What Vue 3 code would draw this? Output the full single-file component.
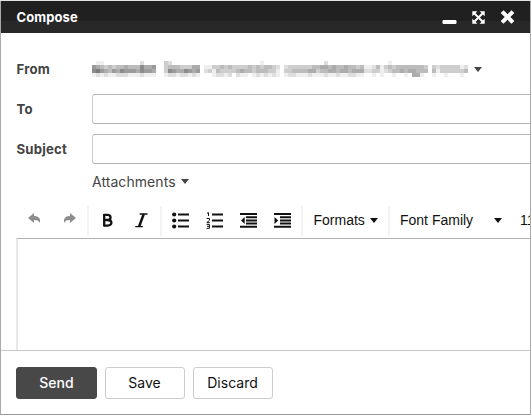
<script setup>
import { computed } from 'vue'

// Darkness levels for the obscured sender, four pixels per cell.
const senderRows = [
  '.11.........2.....32......................1...............2...............1...................',
  '6543434454447556..344433355.1133434333343434432.2333333445545445443411' + '24134344444443.323333312',
  '7865465766657665..376557656.2314333345443444331.3344445534455455455522' + '33123445455444.413333334',
  '1212112221112111..122122121...12212.211.1212121.12211121112112112211..' + '1.1..1..1.551..1..1...1.'
]

const senderCells = computed(() =>
  senderRows.flatMap((row, y) =>
    [...row].map((level, x) => ({ x: x * 4, y: y * 4, level: Number(level) }))
      .filter(cell => cell.level > 0)
  )
)
</script>

<template>
  <main class="page">
    <section class="window">
      <header class="titlebar">
        <h1>Compose</h1>
        <svg class="window-icons" viewBox="0 0 74 18" width="74" height="18">
          <rect x="0.5" y="12" width="14" height="4" rx="1.2" fill="#fff" />
          <g stroke="#fff" stroke-width="1.9" fill="#fff">
            <path d="M32 5L41 14M41 5L32 14" />
            <path stroke="none" d="M30.3 3.2H35.4L30.3 8.3zM37.6 3.2h5.1V8.3zM30.3 10.7l5.1 5.1h-5.1zM42.7 10.7v5.1H37.6z" />
          </g>
          <path d="M61.5 5L69.5 13M69.5 5L61.5 13" stroke="#fff" stroke-width="4" stroke-linecap="square" stroke-linejoin="round" />
        </svg>
      </header>

      <div class="fields">
        <div class="row sender-row">
          <label>From</label>
          <svg class="sender" width="380" height="16" viewBox="0 0 380 16" shape-rendering="crispEdges">
            <rect v-for="(cell, i) in senderCells" :key="i" :x="cell.x" :y="cell.y" width="4" height="4" fill="#222" :fill-opacity="cell.level * 0.075" />
          </svg>
          <i class="caret"></i>
        </div>
        <div class="row"><label>To</label><input type="text" aria-label="To"></div>
        <div class="row subject"><label>Subject</label><input type="text" aria-label="Subject"></div>
        <div class="attachments"><span>Attachments</span><i class="caret"></i></div>
      </div>

      <div class="toolbar">
        <div class="group history">
          <svg width="13" height="12" viewBox="0 0 13 12"><path d="M0 5L6 0V3C10.5 3 12.6 5 12 10C10.5 7.6 9 7 6 7V10Z" fill="#8d8d8d" /></svg>
          <svg width="13" height="12" viewBox="0 0 13 12"><path d="M12 5L6 0V3C1.5 3-.6 5 0 10C1.5 7.6 3 7 6 7V10Z" fill="#8d8d8d" /></svg>
        </div>
        <div class="group style">
          <svg width="12" height="15" viewBox="0 0 12 15"><path d="M1.6 1.8H5.4C9.6 1.8 9.5 7 5.5 7H2.2M5.5 7C10.7 7 10.6 12.6 5.7 12.6H1.6M2.2 1V13.3" fill="none" stroke="#111" stroke-width="2.3" /></svg>
          <svg width="13" height="15" viewBox="0 0 13 15"><path d="M4.6 1H12.5M.3 13.6H7.8" stroke="#111" stroke-width="1.4" /><path d="M8.8 1L4.1 13.5" stroke="#111" stroke-width="2.5" /></svg>
        </div>
        <div class="group lists">
          <svg width="17" height="17" viewBox="0 0 17 17"><path d="M6 2.5h11M6 8.5h11M6 14.5h11" stroke="#111" stroke-width="2" /><g fill="#111"><circle cx="2.2" cy="2.5" r="2.1"/><circle cx="2.2" cy="8.5" r="2.1"/><circle cx="2.2" cy="14.5" r="2.1"/></g></svg>
          <svg width="17" height="17" viewBox="0 0 17 17"><path d="M6 2.5h11M6 8.5h11M6 14.5h11" stroke="#111" stroke-width="2" /><path d="M1 1.2L2.5.7V4M.6 6.5h2.9v1.8L.8 10.6h3M.6 12.4h2.8v4H.5M1 14.3h2.5" fill="none" stroke="#111" stroke-width="1" /></svg>
          <svg width="17" height="17" viewBox="0 0 17 17"><path d="M0 2h17M6 5.2h11M6 8.4h11M6 11.6h11M0 14.8h17" stroke="#111" stroke-width="2" /><path d="M4.7 5v7L1 8.5z" fill="#111" /></svg>
          <svg width="17" height="17" viewBox="0 0 17 17"><path d="M0 2h17M6 5.2h11M6 8.4h11M6 11.6h11M0 14.8h17" stroke="#111" stroke-width="2" /><path d="M.5 5v7l3.7-3.5z" fill="#111" /></svg>
        </div>
        <div class="group formats"><span>Formats</span><i class="caret"></i></div>
        <div class="group fonts"><span class="family">Font Family</span><i class="caret"></i><span class="size">11</span></div>
      </div>

      <div class="editor"></div>

      <footer>
        <button class="primary">Send</button>
        <button class="save">Save</button>
        <button>Discard</button>
      </footer>
    </section>
  </main>
</template>

<style>
body { margin: 0; overflow: hidden; }
</style>

<style scoped>
* { box-sizing: border-box; }
.page { width: 531px; height: 415px; padding-top: 1px; background: #dfe3e1; font: 14px Inter, sans-serif; color: #444; }
.window { width: 531px; height: 414px; border: 1px solid #aaa; border-top: 0; border-bottom-color: #999; background: #fff; overflow: hidden; display: flex; flex-direction: column; }
.titlebar { height: 32px; flex: none; display: flex; align-items: center; justify-content: space-between; padding: 0 14px 0 15.5px; background: linear-gradient(#202020 62%, #282828 63%); }
h1 { margin: 0; font-size: 13px; line-height: 20px; color: #fff; font-weight: 700; letter-spacing: .1px; }
.fields { height: 168px; flex: none; padding: 16px 0 0 15px; }
.row { height: 40px; display: flex; align-items: center; }
.row label { width: 76px; flex: none; padding-left: .5px; font-size: 13.2px; font-weight: 700; letter-spacing: .2px; }
.row input { width: 470px; height: 30px; flex: none; border: 1px solid #b5b5b5; border-left-color: #ccc; border-radius: 3px; padding: 0; background: #fff; }
.sender { display: block; flex: none; }
.caret { display: block; width: 0; height: 0; flex: none; border: 4.5px solid transparent; border-top-color: currentColor; border-top-width: 5px; border-bottom: 0; }
.sender-row .caret { margin-left: 2px; }
.attachments { padding-left: 76px; height: 24px; display: flex; align-items: center; gap: 5px; font-size: 14px; letter-spacing: .06px; }
.toolbar { height: 37px; flex: none; display: flex; padding: 5px 0 2px 15px; color: #111; font: 14px "Liberation Sans", sans-serif; }
.group { flex: none; height: 30px; display: flex; align-items: center; border-right: 2px solid #f3f3f3; }
.history { width: 73px; padding: 0 0 4px 12px; gap: 23px; }
.style { width: 73px; padding: 0 0 2px 13px; gap: 21px; }
.lists { width: 141px; padding: 0 0 2px 10px; gap: 17px; }
.formats { width: 87px; padding: 0 0 2px 10.5px; gap: 5px; }
.fonts { width: 200px; padding: 0 0 2px 10px; border-right: 0; }
.family { width: 94px; }
.size { margin-left: 18px; white-space: nowrap; }
.editor { height: 112px; flex: none; margin-left: 15px; border-top: 1px solid #b0b0b0; border-left: 2px solid #e8e8e8; }
footer { flex: 1; border-top: 1px solid #c8c8c8; padding: 16px 0 0 15px; display: flex; gap: 8px; }
button { height: 32px; width: 80px; flex: none; padding: 0 0 1px; border: 1px solid #ccc; border-radius: 3px; background: #fff; color: #111; font: 14px Inter, sans-serif; }
.primary { width: 81px; margin-right: -.5px; background: #484848; border-color: #484848; color: #fff; font-weight: 500; }
</style>
